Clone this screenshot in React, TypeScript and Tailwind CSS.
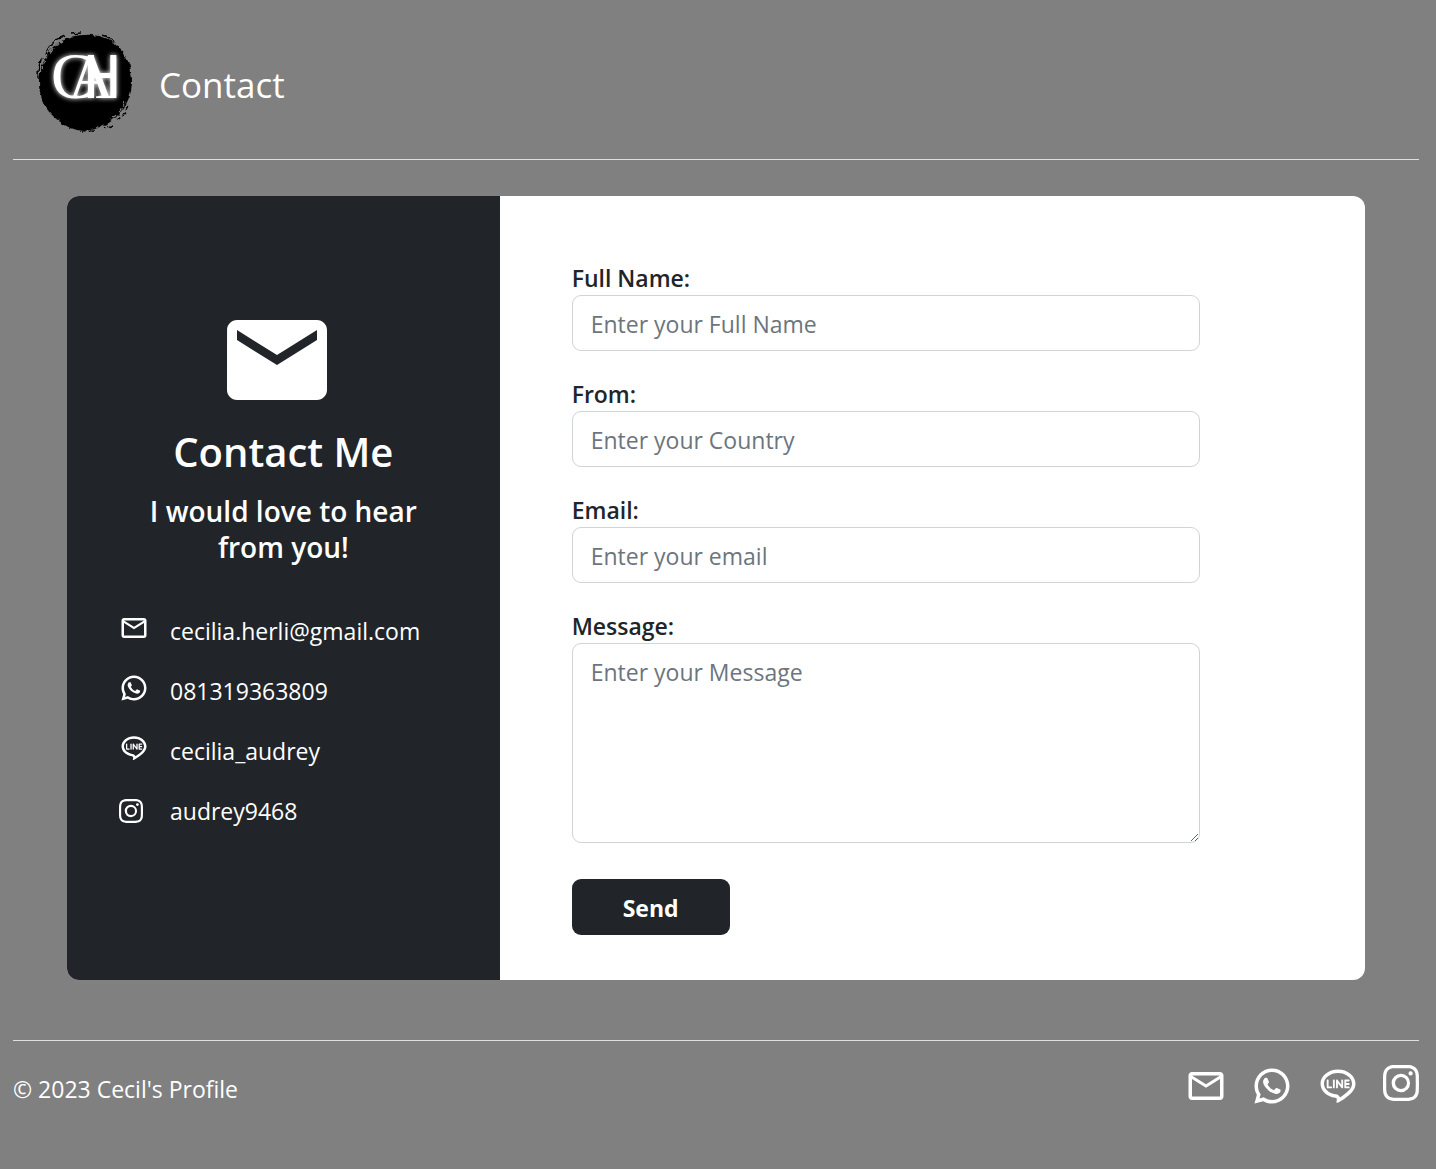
import type { ComponentType, ReactNode } from "react";
import { MdEmail, MdOutlineEmail } from "react-icons/md";
import { RiLineLine, RiWhatsappLine } from "react-icons/ri";
import { BsInstagram } from "react-icons/bs";

type IconProps = { className?: string };

function Logo() {
  return (
    <svg viewBox="0 0 100 104" className="h-26 w-25" role="img" aria-label="CAH logo">
      <defs>
        <filter id="glow" x="-30%" y="-30%" width="160%" height="160%">
          <feGaussianBlur stdDeviation="2.500" result="b" />
          <feMerge>
            <feMergeNode in="b" />
            <feMergeNode in="SourceGraphic" />
          </feMerge>
        </filter>
        <filter id="brush" x="-10%" y="-10%" width="120%" height="120%">
          <feTurbulence type="fractalNoise" baseFrequency="0.16" numOctaves="2" seed="4" result="n" />
          <feDisplacementMap in="SourceGraphic" in2="n" scale="5" xChannelSelector="R" yChannelSelector="G" />
        </filter>
      </defs>
      <g filter="url(#brush)">
        <path d="M50 5C63 4 75 9 84 18C93 27 97 39 97 51C97 64 92 75 84 84C76 94 64 99 50 101C38 101 26 94 17 85C8 76 4 64 4 52C4 41 8 28 17 18C26 9 38 5 50 5Z" />
        <g fill="none" stroke="black" strokeWidth="1.500">
          <path d="M10 24C14 15 21 9 30 6M3 46C3 39 4 33 7 28M36 4L46 3M66 5C71 6 76 9 80 13" />
          <path d="M93 76C91 82 87 87 82 90M78 95L70 98M59 101L47 102" strokeDasharray="5 2" />
        </g>
        <g fill="none" stroke="#808080" strokeWidth="1.300" strokeDasharray="4 2 7 3">
          <path d="M11 29C15 21 20 15 27 11M16 17C20 13 26 10 32 8M7 40L10 31M90 72C87 80 81 86 75 90M70 95L61 98" />
        </g>
      </g>
      <g filter="url(#glow)" fill="white">
        <text x="16" y="68" fontFamily="'Liberation Serif', serif" fontSize="65">C</text>
        <text x="33" y="68" fontFamily="'Liberation Serif', serif" fontSize="64">A</text>
        <text x="48" y="68" fontFamily="'Liberation Mono', monospace" fontSize="64">H</text>
      </g>
    </svg>
  );
}

const CONTACTS: { icon: ReactNode; text: string; href: string }[] = [
  { icon: <MdOutlineEmail className="size-[30px]" />, text: "cecilia.herli@gmail.com", href: "mailto:cecilia.herli@gmail.com" },
  { icon: <RiWhatsappLine className="size-[30px]" />, text: "081319363809", href: "#whatsapp" },
  { icon: <RiLineLine className="size-[30px]" />, text: "cecilia_audrey", href: "#line" },
  { icon: <BsInstagram className="mt-1.5 size-6" />, text: "audrey9468", href: "#instagram" },
];

const SOCIALS: { Icon: ComponentType<IconProps>; label: string; href: string; className: string }[] = [
  { Icon: MdOutlineEmail, label: "Email", href: "#email", className: "size-[42px]" },
  { Icon: RiWhatsappLine, label: "WhatsApp", href: "#whatsapp", className: "size-[42px]" },
  { Icon: RiLineLine, label: "LINE", href: "#line", className: "size-[42px]" },
  { Icon: BsInstagram, label: "Instagram", href: "#instagram", className: "size-9" },
];

const FIELDS = [
  { id: "name", label: "Full Name:", placeholder: "Enter your Full Name", type: "text" },
  { id: "country", label: "From:", placeholder: "Enter your Country", type: "text" },
  { id: "email", label: "Email:", placeholder: "Enter your email", type: "email" },
];

export default function App() {
  return (
    <div className="min-h-screen bg-[#808080] pr-[17px] pl-[13px] font-['Open_Sans',sans-serif] text-[23px] leading-9 text-white">
      <header className="flex h-40 items-center gap-6 border-b border-[#dfdfdf] pt-1 pl-[22px]">
        <Logo />
        <h1 className="pt-1.5 text-[35px] leading-[44px]">Contact</h1>
      </header>

      <main className="px-[54px] pt-9 pb-15">
        <div className="flex overflow-hidden rounded-xl bg-white">
          <section className="flex w-1/3 flex-col bg-[#212529] px-[51px] pt-[104px]">
            <MdEmail className="mr-3 size-[120px] self-center" />
            <h2 className="mt-1 text-center text-[40px] leading-[56px] font-semibold">Contact Me</h2>
            <p className="mt-[13px] px-5 text-center text-[28px] leading-9 font-semibold">I would love to hear from you!</p>
            <ul className="mt-12 flex flex-col gap-6">
              {CONTACTS.map((c) => (
                <li key={c.text}>
                  <a href={c.href} className="flex h-9 items-start">
                    <span className="flex w-13 shrink-0 pl-px">{c.icon}</span>
                    <span>{c.text}</span>
                  </a>
                </li>
              ))}
            </ul>
          </section>

          <form className="flex flex-1 flex-col items-start pt-[63px] pr-[165px] pb-[45px] pl-18 text-[#212529]" onSubmit={(e) => e.preventDefault()}>
            {FIELDS.map((f) => (
              <div key={f.id} className="mb-6 flex w-full flex-col">
                <label htmlFor={f.id} className="h-9 pt-px font-semibold">{f.label}</label>
                <input id={f.id} type={f.type} placeholder={f.placeholder} className="h-14 rounded-[9px] border border-[#ced4da] bg-white px-[18px] pt-0.5 placeholder:text-[#6c757d]" />
              </div>
            ))}
            <label htmlFor="message" className="h-9 pt-px font-semibold">Message:</label>
            <textarea id="message" placeholder="Enter your Message" className="h-50 w-full rounded-[9px] border border-[#ced4da] bg-white px-[18px] py-2.5 placeholder:text-[#6c757d]" />
            <button type="submit" className="mt-9 h-14 rounded-[9px] bg-[#212529] px-[51px] pt-0.5 font-bold text-white">Send</button>
          </form>
        </div>
      </main>

      <footer className="flex items-start justify-between border-t border-[#dfdfdf] pt-6">
        <p className="pt-1.5">© 2023 Cecil's Profile</p>
        <nav className="flex items-start gap-6" aria-label="Social links">
          {SOCIALS.map(({ Icon, label, href, className }) => (
            <a key={label} href={href} aria-label={label}>
              <Icon className={className} />
            </a>
          ))}
        </nav>
      </footer>
    </div>
  );
}
